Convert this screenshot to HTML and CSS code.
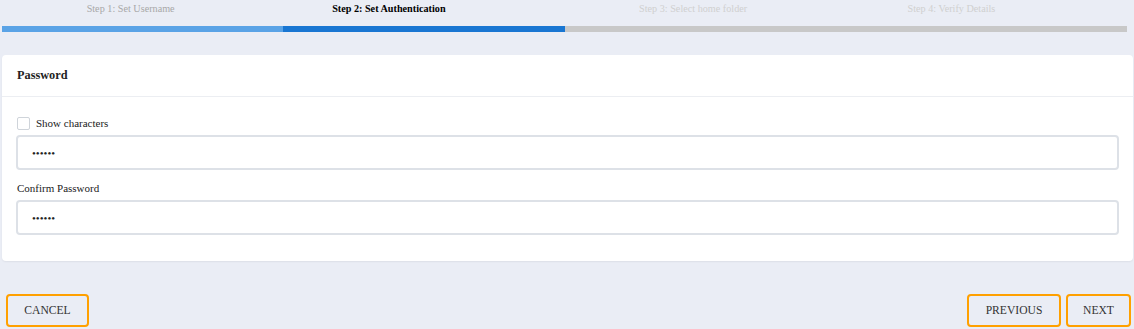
FILE: index.html
```html
<!DOCTYPE html>
<html lang="en">
<head>
    <meta charset="UTF-8">
    <meta name="viewport" content="width=device-width, initial-scale=1.0">
    <title>Add User - Set Authentication</title>
    <link rel="stylesheet" href="styles.css">
</head>
<body>
    <div class="stepper">
        <div class="step done">
            <span class="step-label">Step 1: Set Username</span>
            <div class="step-bar"></div>
        </div>
        <div class="step active">
            <span class="step-label">Step 2: Set Authentication</span>
            <div class="step-bar"></div>
        </div>
        <div class="step">
            <span class="step-label">Step 3: Select home folder</span>
            <div class="step-bar"></div>
        </div>
        <div class="step">
            <span class="step-label">Step 4: Verify Details</span>
            <div class="step-bar"></div>
        </div>
    </div>

    <div class="card">
        <div class="card-header">Password</div>
        <div class="card-body">
            <label class="check">
                <input type="checkbox" id="showChars">
                <span>Show characters</span>
            </label>
            <input class="field" type="password" value="secret">
            <label class="field-label">Confirm Password</label>
            <input class="field" type="password" value="secret">
        </div>
    </div>

    <div class="actions">
        <button class="btn">CANCEL</button>
        <div class="actions-right">
            <button class="btn btn-prev">PREVIOUS</button>
            <button class="btn btn-next">NEXT</button>
        </div>
    </div>
</body>
</html>
```

FILE: styles.css
```css
body {
    font-family: "Liberation Serif", "Times New Roman", serif;
    background-color: #eaedf5;
    color: #222;
    margin: 0;
    padding: 0;
}
.stepper {
    display: flex;
    padding: 0 7px 0 2px;
}
.step {
    flex: 1;
    text-align: center;
}
.step-label {
    display: block;
    height: 26px;
    line-height: 17px;
    font-size: 10.2px;
    color: #d0d0d0;
    padding-right: 24px;
}
.step:nth-child(even) .step-label {
    padding-right: 70px;
}
.step-bar {
    height: 6px;
    background-color: #c8c8c8;
}
.step.done .step-label {
    color: #a8a8a8;
}
.step.done .step-bar {
    background-color: #5aa3e6;
}
.step.active .step-label {
    color: #000;
    font-weight: bold;
}
.step.active .step-bar {
    background-color: #1976d2;
}
.card {
    margin: 23px 1px 0 2px;
    background: #fff;
    border-radius: 4px;
    box-shadow: 0 1px 2px rgba(0, 0, 0, 0.06);
}
.card-header {
    height: 41px;
    line-height: 41px;
    padding: 0 15px;
    font-size: 12.3px;
    font-weight: bold;
    border-bottom: 1px solid #eceef2;
}
.card-body {
    padding: 19px 14px 26px 14px;
}
.check {
    display: flex;
    align-items: center;
    height: 14px;
    font-size: 11px;
    margin-bottom: 5px;
}
.check input {
    appearance: none;
    width: 13px;
    height: 13px;
    margin: 0 6px 0 1px;
    border: 1px solid #cfd4da;
    border-radius: 2px;
    background: #fff;
}
.field {
    display: block;
    box-sizing: border-box;
    width: 100%;
    height: 35px;
    padding: 0 14px;
    border: 2px solid #dde1e7;
    border-radius: 4px;
    font-family: inherit;
    font-size: 11px;
    color: #222;
    outline: none;
}
.field-label {
    display: block;
    font-size: 11px;
    line-height: 14px;
    margin: 11px 0 5px 1px;
}
.actions {
    display: flex;
    justify-content: space-between;
    margin-top: 33px;
    padding: 0 3px 0 6px;
}
.actions-right {
    display: flex;
    gap: 5px;
}
.btn {
    height: 33px;
    width: 83px;
    background: transparent;
    border: 2px solid #ffa000;
    border-radius: 4px;
    font-family: inherit;
    font-size: 11.6px;
    color: #333;
    cursor: pointer;
}
.btn-prev {
    width: 94px;
}
.btn-next {
    width: 65px;
}
```
